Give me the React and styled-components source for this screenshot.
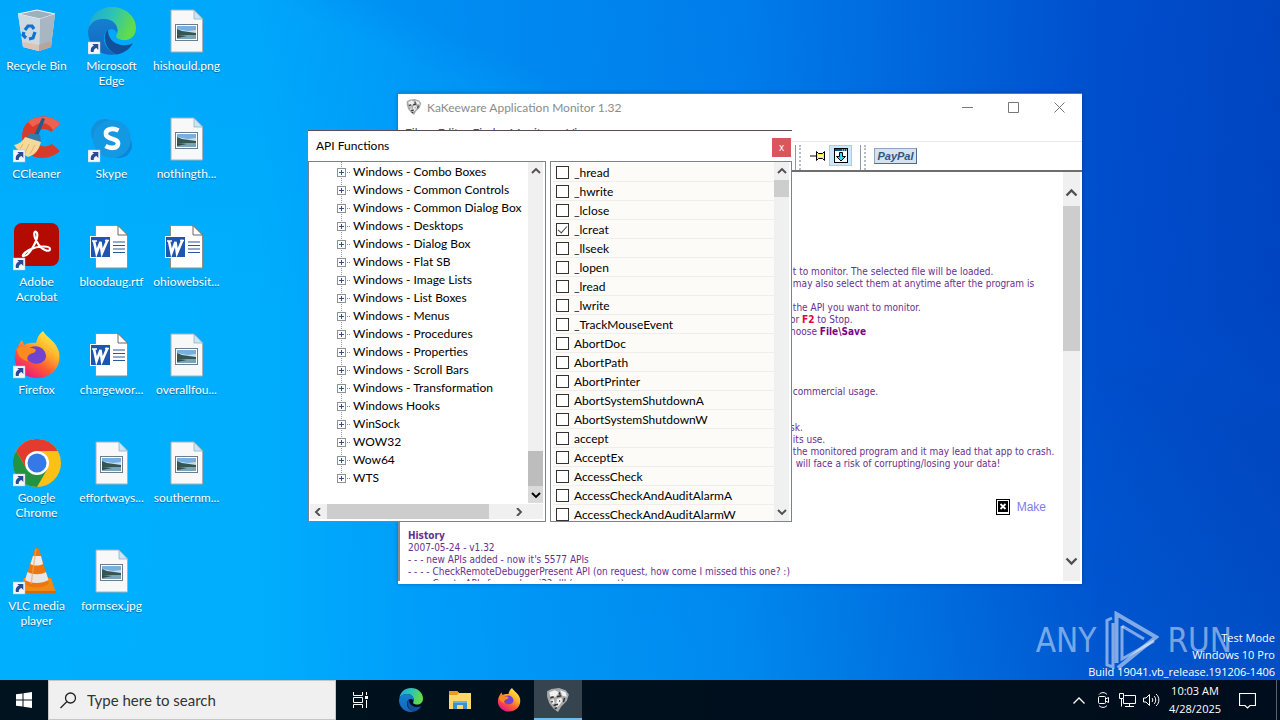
import React, { useState } from "react";
import styled, { createGlobalStyle, css } from "styled-components";

const ui = `Lato, "Open Sans", sans-serif`;
const sans = `"Open Sans", "Noto Sans", sans-serif`;
const doc = `"DejaVu Sans Condensed", "DejaVu Sans", sans-serif`;

const Global = createGlobalStyle`
  *, *::before, *::after { box-sizing: border-box; }
  body { margin: 0; font: 12px/15px ${ui}; color: #000; overflow: hidden; }
  button { border: 0; padding: 0; background: none; font: inherit; color: inherit; cursor: default; }
  svg { display: block; flex: none; }
`;

/* ---------- desktop ---------- */

const Screen = styled.div`
  display: flex;
  flex-direction: column;
  min-height: 100vh;
`;

const Desktop = styled.main`
  position: relative;
  flex: 1;
  overflow: hidden;
  background:
    linear-gradient(24deg, transparent 64%, rgba(0, 90, 225, 0.14) 68%, rgba(0, 80, 215, 0.08) 88%, transparent),
    linear-gradient(180deg, rgba(0, 100, 225, 0.1), rgba(0, 110, 230, 0) 45%, rgba(0, 170, 255, 0.12)),
    linear-gradient(90deg, #00b0fe 0%, #00aefd 20%, #009bf8 34%, #0084ec 58%, #0062d8 75%, #004cca 86%, #0042bd 100%);
`;

const IconGrid = styled.div`
  display: grid;
  grid-auto-flow: column;
  grid-template-rows: repeat(6, 108px);
  grid-auto-columns: 75px;
  margin-left: -1px;
`;

const Shortcut = styled.button`
  display: flex;
  flex-direction: column;
  align-items: center;
  gap: 3px;
  padding-top: 7px;
  color: #fff;
  text-align: center;
  text-shadow: 0 1px 1px rgba(0, 40, 90, 0.55);
`;

const Watermark = styled.div`
  position: absolute;
  right: 48px;
  bottom: 9px;
  display: flex;
  align-items: center;
  gap: 8px;
  font: 33px/60px ${doc};
  color: rgba(255, 255, 255, 0.48);
`;

const BuildInfo = styled.div`
  position: absolute;
  right: 5px;
  bottom: 0;
  text-align: right;
  color: #fff;
  font: 11px/17px ${sans};
`;

/* ---------- window parts ---------- */

const MainWindow = styled.section`
  position: absolute;
  left: 398px;
  top: 93px;
  width: 684px;
  height: 491px;
  display: flex;
  flex-direction: column;
  background: #fff;
  border-top: 1px solid #3b7fd0;
  box-shadow: 0 0 4px rgba(0, 20, 80, 0.35);
`;

const TitleBar = styled.header`
  display: flex;
  align-items: center;
  height: 26px;
  padding-left: 8px;
  gap: 5px;
  color: #8b8b8b;
`;

const Title = styled.span`
  flex: 1;
`;

const CaptionButton = styled.button`
  width: 46px;
  height: 26px;
  display: grid;
  place-items: center;
`;

const MenuBar = styled.nav`
  display: flex;
  gap: 14px;
  height: 22px;
  padding: 4px 7px 0;
  color: #555;
  border-bottom: 1px solid #e8e8e8;
`;

const ToolBar = styled.div`
  display: flex;
  justify-content: flex-end;
  align-items: flex-start;
  height: 30px;
  padding: 3px 165px 0 0;
  border-bottom: 2px solid #6e6e6e;
`;

const Grip = styled.i`
  width: 6px;
  height: 25px;
  margin-right: 5px;
  border-left: 1px solid #8c99a8;
  border-right: 2px dotted #b4bcc8;
`;

const ToolButton = styled.button`
  display: grid;
  place-items: center;
  width: 23px;
  height: 21px;
  background: ${(p) => (p.$active ? "#cce8ff" : "transparent")};
  border: 1px solid ${(p) => (p.$active ? "#99d1ff" : "transparent")};
`;

const ToolGroup = styled.div`
  display: flex;
  width: ${(p) => p.$width}px;
`;

const PayPal = styled.button`
  width: 43px;
  height: 16px;
  margin: 3px 0 0 3px;
  background: #d5e3f1;
  border: 1px solid #8ea6bd;
  border-right-color: #4d6d8d;
  border-bottom-color: #4d6d8d;
  color: #31557f;
  font: italic bold 11px/14px "Liberation Sans", sans-serif;
`;

const Client = styled.div`
  flex: 1;
  min-height: 0;
  display: flex;
  margin: 0 2px 3px 0;
  border-left: 2px solid #8b8b8b;
`;

const Page = styled.article`
  flex: 1;
  overflow: hidden;
  padding: 94px 8px 0;
  color: #66308f;
  font: 10px/12px ${doc};
  white-space: pre;
`;

const Guide = styled.p`
  margin: 0 0 0 382px;
  min-height: 12px;
`;

const Key = styled.b`
  color: ${(p) => (p.$red ? "#e6003c" : "#800080")};
`;

const Donate = styled.div`
  display: flex;
  justify-content: flex-end;
  align-items: center;
  gap: 7px;
  height: 60px;
  padding: 14px 9px 0 0;
`;

const DonateLink = styled.a`
  color: #7c7cf0;
  font: 12px/15px "Liberation Sans", sans-serif;
  text-decoration: none;
`;

const History = styled.div`
  h2 { margin: 0; font: bold 10px/12px ${doc}; }
  p { margin: 0; }
`;

/* ---------- scroll bars ---------- */

const Bar = styled.div`
  flex: none;
  display: flex;
  background: #f0f0f0;
  ${(p) =>
    p.$horizontal
      ? css`height: 15px; flex-direction: row; margin: 1px 0 0 1px;`
      : p.$wide
        ? css`width: 17px; flex-direction: column; padding-top: 8px;`
        : css`width: 15px; flex-direction: column;`}
`;

const ArrowButton = styled.button`
  flex: none;
  display: grid;
  place-items: center;
  width: ${(p) => p.$w}px;
  height: ${(p) => p.$h}px;
  background: ${(p) => (p.$pressed ? "#dadada" : "transparent")};
  color: ${(p) => (p.$pressed ? "#000" : "#505050")};
`;

const Thumb = styled.i`
  flex: 0 0 ${(p) => p.$size}px;
  background: ${(p) => (p.$dark ? "#bdbdbd" : "#cdcdcd")};
`;

const Space = styled.i`
  flex: 1;
`;

const Corner = styled.i`
  width: 16px;
`;

/* ---------- API dialog ---------- */

const Dialog = styled.section`
  position: absolute;
  left: 308px;
  top: 130px;
  width: 484px;
  height: 392px;
  display: flex;
  flex-direction: column;
  background: #fff;
  border-top: 1px solid #5c4a58;
`;

const DialogTitle = styled.header`
  display: flex;
  justify-content: space-between;
  align-items: flex-start;
  height: 30px;
  padding: 7px 1px 0 8px;
`;

const CloseButton = styled.button`
  width: 19px;
  height: 19px;
  background: #d9565c;
  color: #fff;
  font: 10px/17px ${sans};
`;

const Panes = styled.div`
  flex: 1;
  min-height: 0;
  display: grid;
  grid-template-columns: 238px 242px;
  justify-content: space-between;
`;

const Pane = styled.div`
  display: flex;
  flex-direction: column;
  min-height: 0;
  overflow: hidden;
  border: 1px solid #7d828a;
  padding-right: 2px;
  padding-bottom: ${(p) => (p.$flush ? 0 : 2)}px;
`;

const PaneBody = styled.div`
  flex: 1;
  min-height: 0;
  display: flex;
`;

const Tree = styled.ul`
  flex: 1;
  margin: 0;
  padding: 0 0 0 28px;
  list-style: none;
  overflow: hidden;
  white-space: nowrap;
`;

const TreeItem = styled.li`
  display: flex;
  align-items: center;
  height: 18px;
  background: repeating-linear-gradient(#999 0 1px, transparent 1px 2px) 4px 0 / 1px ${(p) => (p.$last ? 9 : 18)}px no-repeat;
`;

const Expander = styled.button`
  display: flex;
  align-items: center;
  width: 16px;
  height: 9px;
  margin-top: 3px;
`;

const List = styled.ul`
  flex: 1;
  margin: 0;
  padding: 1px 0 0 2px;
  list-style: none;
  overflow: hidden;
`;

const ListItem = styled.li`
  height: 19px;
  background: #fdfbf8;
  border-bottom: 1px solid #f0edea;
`;

const CheckLabel = styled.label`
  display: flex;
  align-items: center;
  gap: 5px;
  height: 19px;
  padding-left: 3px;
`;

const Check = styled.input`
  appearance: none;
  flex: none;
  width: 13px;
  height: 13px;
  margin: 0;
  border: 1px solid #333;
  background: #fff;
  &:checked::before {
    content: "";
    display: block;
    width: 9px;
    height: 5px;
    margin: 2px 0 0 1px;
    border: solid #444;
    border-width: 0 0 1px 1px;
    transform: rotate(-48deg);
  }
`;

/* ---------- task bar ---------- */

const Taskbar = styled.footer`
  position: relative;
  display: flex;
  height: 40px;
  background: linear-gradient(90deg, #00131f, #000d1c);
  color: #fff;
`;

const TaskButton = styled.button`
  display: grid;
  place-items: center;
  width: 48px;
  margin-right: 1px;
  background: ${(p) => (p.$active ? "#35444f" : "transparent")};
  border-bottom: 2px solid ${(p) => (p.$active ? "#76b9ed" : "transparent")};
  border-top: 2px solid transparent;
`;

const StartButton = styled(TaskButton)`
  margin: 0;
`;

const TaskViewButton = styled(TaskButton)`
  margin-right: 3px;
`;

const Search = styled.label`
  display: flex;
  align-items: center;
  gap: 10px;
  width: 288px;
  padding-left: 11px;
  background: #f0f0f0;
  border: 1px solid #c6c6c6;
`;

const SearchInput = styled.input`
  flex: 1;
  min-width: 0;
  padding: 0;
  border: 0;
  background: none;
  font: 15px/20px ${ui};
  &::placeholder { color: #333; opacity: 1; }
`;

const Tray = styled.div`
  display: flex;
  align-items: center;
  margin-left: auto;
`;

const TrayButton = styled.button`
  display: grid;
  place-items: center;
  width: 24px;
  height: 40px;
`;

const Clock = styled.time`
  width: 64px;
  text-align: center;
  font: 11px/18px ${sans};
`;

const NoticeButton = styled(TrayButton)`
  width: 41px;
`;

const ShowDesktop = styled.button`
  width: 4px;
  height: 40px;
  margin-left: 8px;
  border-left: 1px solid #59636d;
`;

/* ---------- drawings ---------- */

const Big = ({ children, arrow }) => (
  <svg width="48" height="48" viewBox="0 0 48 48" aria-hidden="true">
    {children}
    {arrow && (
      <g>
        <rect x="0" y="35" width="12" height="12" fill="#f4f6fa" stroke="#b7c0cc" strokeWidth=".5" />
        <path d="M3 45c-.8-3 .4-5.700 3-6.300L4.300 37H10.300V43L8.500 41.100C6.500 41.600 5.600 43 5.700 45Z" fill="#2a4a96" />
      </g>
    )}
  </svg>
);

const RecycleBin = () => (
  <Big>
    <path d="M5 7 24 3 42 7 38 40 26 44 10 40Z" fill="#d3dde5" />
    <path d="M5 7 24 3 42 7 27 12Z" fill="#9eb0bf" stroke="#f2f7fb" strokeWidth="1" />
    <path d="M27 12 42 7 38 40 26 44Z" fill="#a8b6c2" />
    <path d="M5 7 27 12 26 44 10 40Z" fill="#cdd8e0" />
    <path d="M10 35 26 38 26 44 10 40Z" fill="#dcc3b4" />
    <path d="M26 38 38 34 38 40 26 44Z" fill="#b5a59d" />
    <g fill="none" stroke="#1473c8" strokeWidth="3.200">
      <path d="M12 23 15 19H19L21 22" />
      <path d="M22 25 20 31 16 32" />
      <path d="M13 31 10 28 11 25" />
    </g>
  </Big>
);

const EdgeShape = ({ id }) => (
  <g>
    <defs>
      <linearGradient id={id + "a"} x1="0" y1="0" x2="1" y2=".3"><stop stopColor="#1ba7dc" /><stop offset=".55" stopColor="#2fc5b0" /><stop offset="1" stopColor="#62dc49" /></linearGradient>
      <linearGradient id={id + "b"} x1="0" y1="0" x2="0" y2="1"><stop stopColor="#157fd1" /><stop offset="1" stopColor="#1267bd" /></linearGradient>
    </defs>
    <path d="M1 20C2 8 12 0 24 0 38 0 48 10 48 21 48 30 41 34 34 33 29 32 27 30 29 27 31 22 28 13 17 12 9 12 3 16 1 20Z" fill={`url(#${id}a)`} />
    <path d="M1 20C4 14 10 11.500 17 12 26 12.500 31 20 29 26 27 20 18 21 16 29 15 37 20 45 30 47 14 51 0 40 0 24Z" fill={`url(#${id}b)`} />
    <path d="M20 23C14 28 16 42 29 47.500 36 46 42 42 45 36 37 41 20 38 20 23Z" fill="#124f9c" />
  </g>
);

const EdgeIcon = () => <Big arrow><EdgeShape id="ed" /></Big>;

const ImageFile = () => (
  <Big>
    <path d="M8 3H31L39.500 12V45H8Z" fill="#f8f8f8" stroke="#a7b0b8" />
    <path d="M31 3V12H39.500Z" fill="#c9e7f6" stroke="#8fb2c8" strokeWidth=".8" />
    <rect x="12.500" y="17.500" width="22" height="16" fill="#fff" stroke="#6c7c8c" />
    <path d="M14 19H33V24H14Z" fill="#78aee0" />
    <path d="M14 22 25 24 33 23V27H14Z" fill="#c3dff2" />
    <path d="M14 22 19 24 33 26V28H14Z" fill="#35564f" />
    <path d="M14 28H33V32H14Z" fill="#7aa5b8" />
    <path d="M14 28 24 29 14 31Z" fill="#2f4b47" />
  </Big>
);

const WordFile = () => (
  <Big>
    <path d="M7.500 2.500H30L39.500 12V45H7.500Z" fill="#fff" stroke="#8d8d8d" />
    <path d="M30 2.500V12H39.500Z" fill="#fff" stroke="#666" />
    <path d="M25 19H37M25 22.500H37M25 26H37M25 29.500H37" stroke="#2b579a" strokeWidth="1.200" />
    <rect x="2.500" y="13.500" width="20" height="21" fill="#1f55b0" stroke="#fff" />
    <path d="M6 18 8.500 30 12.500 19 14 30 19.500 17" fill="none" stroke="#fff" strokeWidth="2.600" />
    <path d="M4 18H9M17 17.500H21" stroke="#fff" strokeWidth="1.500" />
  </Big>
);

const CCleaner = () => (
  <Big arrow>
    <path d="M47 9C40 0 24-1 15 7 6 15 8 32 16 39 25 46 40 43 47 36L39 29C32 34 23 31 22 23 22 14 32 11 38 17Z" fill="#d93b2b" />
    <path d="M47 9C40 0 24-1 15 7L20 12C27 5 36 8 40 15Z" fill="#ee6150" />
    <path d="M29 3 32 4 25 21 21 20Z" fill="#225b8c" />
    <path d="M17 18 27 20 28 27 13 23Z" fill="#3979a9" />
    <path d="M12 22 28 27C26 35 22 40 15 42 9 39 4 35 1 30 6 29 10 26 12 22Z" fill="#f5d99b" />
    <path d="M10 29 7 34M16 29 12 38M22 30 17 39" fill="none" stroke="#dfb76c" />
  </Big>
);

const SkypeIcon = () => (
  <Big arrow>
    <circle cx="17" cy="18" r="14" fill="#168fdb" />
    <circle cx="31" cy="30" r="13" fill="#0c86d8" />
    <circle cx="24" cy="24" r="19" fill="#1398e3" />
    <path d="M30.500 15.500C23 12 17 15 18 19.500 19 25 31 23 30 29 29 34 22 33.500 17.500 31" fill="none" stroke="#fff" strokeWidth="4.600" />
  </Big>
);

const AcrobatIcon = () => (
  <Big arrow>
    <rect x="1" y="0" width="45" height="43" rx="8" fill="#b30b00" />
    <path d="M11 33C16 33 26 16 24 10 22 6 19 11 24 19 28 27 37 30 37 26 37 23 26 22 16 27 9 31 9 34 11 33Z" fill="none" stroke="#fff" strokeWidth="2.200" />
  </Big>
);

const FoxShape = ({ id }) => (
  <g>
    <defs>
      <linearGradient id={id} x1=".85" y1=".05" x2=".25" y2="1"><stop stopColor="#fff04a" /><stop offset=".35" stopColor="#ffb22a" /><stop offset=".65" stopColor="#ff5a33" /><stop offset="1" stopColor="#e5128c" /></linearGradient>
    </defs>
    <path d="M30 0C34 7 43 10 46 21 49 36 38 47 24 47 10 47 0 36 2 23 3 17 6 13 9 9L11 14C16 11 23 12 23 12 24 7 26 3 30 0Z" fill={`url(#${id})`} />
    <path d="M13 20C19 12 32 14 33 25 33 33 20 36 14 28Z" fill="#7342cf" />
    <path d="M4 18C7 14 14 17 18 17 24 17 24 21 20 22 15 23 13 27 15 30 8 29 4 24 4 18Z" fill="#ff8b20" />
  </g>
);

const FirefoxIcon = () => <Big arrow><FoxShape id="fox" /></Big>;

const ChromeIcon = () => (
  <Big arrow>
    <circle cx="24" cy="24" r="24" fill="#fbc116" />
    <path d="M24 24V12H44.800A24 24 0 0 0 3.200 12L13.600 30Z" fill="#e33b2e" />
    <path d="M3.200 12 13.600 30 24 36 34.400 30 24 48A24 24 0 0 1 3.200 12Z" fill="#229342" />
    <circle cx="24" cy="24" r="12" fill="#fff" />
    <circle cx="24" cy="24" r="9.500" fill="#3579e8" />
  </Big>
);

const VlcIcon = () => (
  <Big arrow>
    <path d="M11 31H38L43 46H6Z" fill="#f18a15" />
    <path d="M6 44H43V46H6Z" fill="#d6690b" />
    <path d="M22 2C23 .5 25 .5 26 2L36 36C32 42 15 42 11 36Z" fill="#ee7611" />
    <path d="M20 9H28L30 17C26 19 21 19 17.500 17Z" fill="#ececec" />
    <path d="M14.500 25C20 28 28 28 33 25L35.500 33C29 37 18 37 12 33Z" fill="#e6e6e6" />
    <path d="M23 2 18 37" stroke="#f9a54a" strokeWidth="1.500" opacity=".6" />
  </Big>
);

const Mask = ({ size }) => (
  <svg width={size} height={size} viewBox="0 0 22 22" aria-hidden="true">
    <path d="M1 3 5 1 12 0 18 2 21 6 19 12 14 17 11 22 7 19 3 14 1 8Z" fill="#a9a9a9" />
    <path d="M3 4 8 2 12 4 9 8 4 8ZM13 2 18 4 19 8 15 7ZM4 11 7 10 8 14 6 15ZM10 10 14 9 15 12 12 16 9 18Z" fill="#f1f1f1" />
    <path d="M4 9 7 8M10 8 14 7M17 9 16 13M7 16 11 15M5 12 6 13M12 12H13M12 4 13 6M8 19 10 18" stroke="#303030" strokeWidth="1.400" />
  </svg>
);

const chevrons = { up: "M1 6 5 2 9 6", down: "M1 2 5 6 9 2", left: "M6 0 2 4 6 8", right: "M3 0 7 4 3 8" };
const Chevron = ({ dir, big }) => (
  <svg width={big ? 13 : 10} height={big ? 10 : 8} viewBox="0 0 10 8" aria-hidden="true">
    <path d={chevrons[dir]} fill="none" stroke="currentColor" strokeWidth="1.900" />
  </svg>
);

const ExplorerIcon = () => (
  <svg width="22" height="20" viewBox="0 0 22 20" aria-hidden="true">
    <path d="M0 1H8L10 3H22V19H0Z" fill="#ffd968" />
    <path d="M0 1H8L10 3 8 5H0Z" fill="#e99b20" />
    <path d="M4 19V11H18V19H14V15H8V19Z" fill="#3b8fd2" />
    <path d="M4 11H18V13H4Z" fill="#63b3ec" />
  </svg>
);

/* ---------- data ---------- */

const shortcuts = [
  ["Recycle Bin", RecycleBin], ["CCleaner", CCleaner], ["Adobe\nAcrobat", AcrobatIcon],
  ["Firefox", FirefoxIcon], ["Google\nChrome", ChromeIcon], ["VLC media\nplayer", VlcIcon],
  ["Microsoft\nEdge", EdgeIcon], ["Skype", SkypeIcon], ["bloodaug.rtf", WordFile],
  ["chargewor...", WordFile], ["effortways...", ImageFile], ["formsex.jpg", ImageFile],
  ["hishould.png", ImageFile], ["nothingth...", ImageFile], ["ohiowebsit...", WordFile],
  ["overallfou...", ImageFile], ["southernm...", ImageFile],
];

const ShortcutName = styled.span`
  white-space: pre;
`;

const groups = [
  "Windows - Combo Boxes", "Windows - Common Controls", "Windows - Common Dialog Box",
  "Windows - Desktops", "Windows - Dialog Box", "Windows - Flat SB", "Windows - Image Lists",
  "Windows - List Boxes", "Windows - Menus", "Windows - Procedures", "Windows - Properties",
  "Windows - Scroll Bars", "Windows - Transformation", "Windows Hooks", "WinSock", "WOW32",
  "Wow64", "WTS",
];

const functions = [
  "_hread", "_hwrite", "_lclose", "_lcreat", "_llseek", "_lopen", "_lread", "_lwrite",
  "_TrackMouseEvent", "AbortDoc", "AbortPath", "AbortPrinter", "AbortSystemShutdownA",
  "AbortSystemShutdownW", "accept", "AcceptEx", "AccessCheck", "AccessCheckAndAuditAlarmA",
  "AccessCheckAndAuditAlarmW",
];

const guide = [
  " t to monitor. The selected file will be loaded.",
  " may also select them at anytime after the program is",
  "",
  " the API you want to monitor.",
  <>or <Key $red>F2</Key> to Stop.</>,
  <>hoose <Key>File\Save</Key></>,
  "", "", "", "",
  " commercial usage.",
  "", "",
  "sk.",
  " its use.",
  " the monitored program and it may lead that app to crash.",
  "  will face a risk of corrupting/losing your data!",
];

/* ---------- composition ---------- */

const Captions = styled.div`
  display: flex;
`;

function CaptionButtons() {
  const draw = { Minimize: "M0 6.500H11", Maximize: "M.5 1.500H10.500V11.500H.5Z", Close: "M.5 1.500 10.500 11.500M10.500 1.500 .5 11.500" };
  return (
    <Captions>
      {Object.entries(draw).map(([name, d]) => (
        <CaptionButton key={name} aria-label={name}>
          <svg width="11" height="12" viewBox="0 0 11 12"><path d={d} fill="none" stroke="#777" /></svg>
        </CaptionButton>
      ))}
    </Captions>
  );
}

function ApplicationMonitor() {
  return (
    <MainWindow aria-label="KaKeeware Application Monitor">
      <TitleBar>
        <Mask size={16} />
        <Title>KaKeeware Application Monitor 1.32</Title>
        <CaptionButtons />
      </TitleBar>
      <MenuBar>
        {["File", "Edit", "Find", "Monitor", "View"].map((m) => <button key={m}>{m}</button>)}
      </MenuBar>
      <ToolBar>
        <Grip />
        <ToolGroup $width={54}>
          <ToolButton aria-label="Stay on top">
            <svg width="16" height="12" viewBox="0 0 16 12">
              <path d="M0 6H6" stroke="#000" />
              <path d="M6.500 1.500V10.500L8.500 8.500H12.500L14.500 10.500V1.500L12.500 3.500H8.500Z" fill="#ffe94a" stroke="#000" />
              <path d="M8 6H13" stroke="#fff" />
            </svg>
          </ToolButton>
          <ToolButton $active aria-label="Minimize to tray">
            <svg width="14" height="15" viewBox="0 0 14 15">
              <rect x=".5" y=".5" width="13" height="14" fill="#fff" stroke="#000" />
              <path d="M1 1H13V3H1Z" fill="#0a4a90" />
              <path d="M8 2H9M10 2H11M12 2H13" stroke="#fff" />
              <path d="M5.500 4.500H8.500V8.500H11.500L7 13 2.500 8.500H5.500Z" fill="#1ee0e8" stroke="#000" />
            </svg>
          </ToolButton>
        </ToolGroup>
        <Grip />
        <PayPal>PayPal</PayPal>
      </ToolBar>
      <Client>
        <Page>
          {guide.map((line, i) => <Guide key={i}>{line}</Guide>)}
          <Donate>
            <svg width="14" height="16" viewBox="0 0 14 16" aria-hidden="true">
              <rect x=".5" y=".5" width="13" height="15" fill="#fff" stroke="#000" />
              <rect x="2" y="2" width="10" height="11" fill="#000" />
              <path d="M4.500 5 9.500 10M9.500 5 4.500 10" stroke="#fff" strokeWidth="1.800" />
            </svg>
            <DonateLink href="#make">Make</DonateLink>
          </Donate>
          <History>
            <h2>History</h2>
            <p>2007-05-24 - v1.32</p>
            <p>- - - new APIs added - now it's 5577 APIs</p>
            <p>- - - - CheckRemoteDebuggerPresent API (on request, how come I missed this one? :)</p>
            <p>- - - - Crypto APIs from advapi32.dll (on request)</p>
          </History>
        </Page>
        <Bar $wide>
          <ArrowButton $w={17} $h={26} aria-label="Scroll up"><Chevron dir="up" big /></ArrowButton>
          <Thumb $size={145} />
          <Space />
          <ArrowButton $w={17} $h={41} aria-label="Scroll down"><Chevron dir="down" big /></ArrowButton>
        </Bar>
      </Client>
    </MainWindow>
  );
}

function ApiDialog() {
  const [picked, setPicked] = useState({ _lcreat: true });
  return (
    <Dialog aria-label="API Functions">
      <DialogTitle>
        <span>API Functions</span>
        <CloseButton aria-label="Close">x</CloseButton>
      </DialogTitle>
      <Panes>
        <Pane>
          <PaneBody>
            <Tree>
              {groups.map((g, i) => (
                <TreeItem key={g} $last={i === groups.length - 1}>
                  <Expander aria-label={"Expand " + g}>
                    <svg width="14" height="9" viewBox="0 0 14 9">
                      <rect x=".5" y=".5" width="8" height="8" fill="#fff" stroke="#919191" />
                      <path d="M2 4.500H7M4.500 2V7" stroke="#34508c" />
                      <path d="M10 4.500H11M12 4.500H13" stroke="#888" />
                    </svg>
                  </Expander>
                  {g}
                </TreeItem>
              ))}
            </Tree>
            <Bar>
              <ArrowButton $w={15} $h={18} aria-label="Scroll up"><Chevron dir="up" /></ArrowButton>
              <Space />
              <Thumb $size={35} $dark />
              <ArrowButton $w={15} $h={17} $pressed aria-label="Scroll down"><Chevron dir="down" /></ArrowButton>
            </Bar>
          </PaneBody>
          <Bar $horizontal>
            <ArrowButton $w={17} $h={15} aria-label="Scroll left"><Chevron dir="left" /></ArrowButton>
            <Thumb $size={162} />
            <Space />
            <ArrowButton $w={17} $h={15} aria-label="Scroll right"><Chevron dir="right" /></ArrowButton>
            <Corner />
          </Bar>
        </Pane>
        <Pane $flush>
          <PaneBody>
            <List>
              {functions.map((f) => (
                <ListItem key={f}>
                  <CheckLabel>
                    <Check type="checkbox" checked={!!picked[f]} onChange={(e) => setPicked({ ...picked, [f]: e.target.checked })} />
                    {f}
                  </CheckLabel>
                </ListItem>
              ))}
            </List>
            <Bar>
              <ArrowButton $w={15} $h={18} aria-label="Scroll up"><Chevron dir="up" /></ArrowButton>
              <Thumb $size={17} />
              <Space />
              <ArrowButton $w={15} $h={18} aria-label="Scroll down"><Chevron dir="down" /></ArrowButton>
            </Bar>
          </PaneBody>
        </Pane>
      </Panes>
    </Dialog>
  );
}

export default function App() {
  return (
    <Screen>
      <Global />
      <Desktop>
        <IconGrid>
          {shortcuts.map(([name, Icon]) => (
            <Shortcut key={name}>
              <Icon />
              <ShortcutName>{name}</ShortcutName>
            </Shortcut>
          ))}
        </IconGrid>
        <ApplicationMonitor />
        <ApiDialog />
        <Watermark>
          ANY
          <svg width="55" height="60" viewBox="0 0 55 60" aria-hidden="true">
            <g fill="none" stroke="#fff" strokeOpacity=".5">
              <path d="M8 7 3 9.500V54L9 56V12" strokeWidth="3" />
              <path d="M12.500 52V3L52 26 14 57" strokeWidth="4" />
              <path d="M18 15V48L50 30" strokeWidth="3" />
              <path d="M18 15 40 28" strokeWidth="3" />
            </g>
          </svg>
          RUN
        </Watermark>
        <BuildInfo>
          Test Mode<br />Windows 10 Pro<br />Build 19041.vb_release.191206-1406
        </BuildInfo>
      </Desktop>
      <Taskbar>
        <StartButton aria-label="Start">
          <svg width="16" height="16" viewBox="0 0 16 16" fill="#fff">
            <path d="M0 2.300 6.500 1.400V7.500H0ZM7.500 1.200 16 0V7.500H7.500ZM0 8.500H6.500V14.600L0 13.700ZM7.500 8.500H16V16L7.500 14.800Z" />
          </svg>
        </StartButton>
        <Search>
          <svg width="17" height="17" viewBox="0 0 17 17" aria-hidden="true">
            <circle cx="10.500" cy="6" r="5" fill="none" stroke="#222" strokeWidth="1.300" />
            <path d="M7 9.500.5 16" stroke="#222" strokeWidth="1.300" />
          </svg>
          <SearchInput aria-label="Search" placeholder="Type here to search" />
        </Search>
        <TaskViewButton aria-label="Task View">
          <svg width="17" height="16" viewBox="0 0 17 16" fill="none" stroke="#fff">
            <path d="M1.500 0V3.500H10.500V0M1.500 16V12.500H10.500V16M1.500 5.500H10.500V10.500H1.500ZM14.500 0V3M14.500 8V16" />
            <path d="M13 5.500H16" strokeWidth="3" />
          </svg>
        </TaskViewButton>
        <TaskButton aria-label="Microsoft Edge"><svg width="24" height="24" viewBox="0 0 48 48"><EdgeShape id="et" /></svg></TaskButton>
        <TaskButton aria-label="File Explorer"><ExplorerIcon /></TaskButton>
        <TaskButton aria-label="Firefox"><svg width="24" height="24" viewBox="0 0 48 48"><FoxShape id="ft" /></svg></TaskButton>
        <TaskButton $active aria-label="KaKeeware Application Monitor"><Mask size={24} /></TaskButton>
        <Tray>
          <TrayButton aria-label="Show hidden icons">
            <svg width="12" height="7" viewBox="0 0 12 7"><path d="M.5 6.500 6 1 11.500 6.500" fill="none" stroke="#fff" strokeWidth="1.300" /></svg>
          </TrayButton>
          <TrayButton aria-label="Meet Now">
            <svg width="13" height="16" viewBox="0 0 13 16" fill="none" stroke="#fff">
              <path d="M2 2.500C4 0 8 0 10 2.500M2 13.500C4 16 8 16 10 13.500" />
              <rect x="1.500" y="4.500" width="7" height="7" rx="1" /><path d="M8.500 7 11.500 5.500V10.500L8.500 9" />
            </svg>
          </TrayButton>
          <TrayButton aria-label="Network">
            <svg width="17" height="14" viewBox="0 0 17 14" fill="none" stroke="#fff">
              <path d="M5.500 2.500H16.500V10.500H4.500V6M10.500 10.500V13M6 13.500H15M.5.500H4.500V5.500H.5ZM2.500 5.500V13.500" />
            </svg>
          </TrayButton>
          <TrayButton aria-label="Volume">
            <svg width="17" height="14" viewBox="0 0 17 14" fill="none" stroke="#fff">
              <path d="M.5 5V9H3L6.500 12.500V1.500L3 5ZM9 5C10 6 10 8 9 9M11 3C13.300 5 13.300 9 11 11M13 1C16.800 4 16.800 10 13 13" />
            </svg>
          </TrayButton>
          <Clock>10:03 AM<br />4/28/2025</Clock>
          <NoticeButton aria-label="Notifications">
            <svg width="17" height="17" viewBox="0 0 17 17"><path d="M.5 1.500H16.500V13.500H11L8.500 16 6 13.500H.5Z" fill="none" stroke="#fff" strokeWidth="1.200" /></svg>
          </NoticeButton>
          <ShowDesktop aria-label="Show desktop" />
        </Tray>
      </Taskbar>
    </Screen>
  );
}
